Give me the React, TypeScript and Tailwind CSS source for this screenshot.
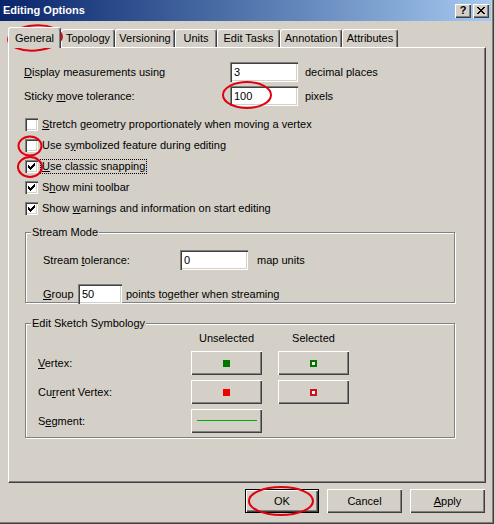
import React from 'react'

const sunken =
  'bg-white shadow-[inset_1px_1px_0_#808080,inset_2px_2px_0_#404040,inset_-1px_-1px_0_#ffffff,inset_-2px_-2px_0_#d4d0c8]'
const raised = 'shadow-[inset_1px_1px_0_#ffffff,inset_-1px_-1px_0_#404040,inset_-2px_-2px_0_#808080]'
const etched =
  'border border-[#808080] shadow-[inset_1px_1px_0_#ffffff,1px_1px_0_#ffffff]'

const CheckBox = ({ checked }: { checked?: boolean }) => (
  <span className={`w-[13px] h-[13px] shrink-0 flex items-center justify-center ${sunken}`}>
    {checked && (
      <svg width="7" height="7" viewBox="0 0 7 7" shapeRendering="crispEdges">
        <path
          d="M6 0h1v1h-1z M5 1h2v1h-2z M0 2h1v1h-1z M4 2h3v1h-3z M0 3h2v1h-2z M3 3h3v1h-3z M0 4h5v1h-5z M1 5h3v1h-3z M2 6h1v1h-1z"
          fill="#000"
        />
      </svg>
    )}
  </span>
)

const CheckRow = ({ checked, children, focus }: { checked?: boolean; children: React.ReactNode; focus?: boolean }) => (
  <div className="h-[21px] flex items-center pl-[16px] gap-[4px]">
    <CheckBox checked={checked} />
    <span className={focus ? 'border border-dotted border-black px-[1px] -ml-[2px]' : ''}>{children}</span>
  </div>
)

const Tab = ({ label, w }: { label: string; w: string }) => (
  <div
    className={`h-[18px] ${w} flex items-center justify-center border-t border-l border-white border-r border-r-[#404040] shadow-[inset_-1px_0_0_#808080] rounded-t-[3px]`}
  >
    {label}
  </div>
)

const SymButton = ({ children }: { children: React.ReactNode }) => (
  <div className={`w-[71px] h-[24px] flex items-center justify-center ${raised}`}>{children}</div>
)

export default function App() {
  return (
    <div className="relative w-[495px] h-[524px] bg-[#d4d0c8] overflow-hidden font-['Liberation_Sans',Arial,sans-serif] text-[11px] leading-[13px] text-black">
      <div className="w-[494px] h-[524px] flex flex-col shadow-[inset_-1px_-1px_0_#404040,inset_-2px_-2px_0_#808080]">
        {/* title bar */}
        <div className="h-[21px] mr-[3px] flex items-center justify-between pl-[3px] pr-[2px] bg-linear-to-r from-[#0a246a] to-[#a6caf0]">
          <span className="text-white font-bold">Editing Options</span>
          <div className="flex gap-[2px]">
            <div className={`w-[16px] h-[14px] bg-[#d4d0c8] flex items-center justify-center font-bold ${raised}`}>?</div>
            <div className={`w-[16px] h-[14px] bg-[#d4d0c8] flex items-center justify-center ${raised}`}>
              <svg width="8" height="7" viewBox="0 0 8 7" shapeRendering="crispEdges">
                <path d="M0 0h2v1h-2z M6 0h2v1h-2z M1 1h2v1h-2z M5 1h2v1h-2z M2 2h4v1h-4z M3 3h2v1h-2z M2 4h4v1h-4z M1 5h2v1h-2z M5 5h2v1h-2z M0 6h2v1h-2z M6 6h2v1h-2z" fill="#000" />
              </svg>
            </div>
          </div>
        </div>

        {/* tabs */}
        <div className="mt-[6px] ml-[8px] h-[20px] flex items-end">
          <div className="relative z-10 h-[21px] w-[53px] -mb-[1px] bg-[#d4d0c8] flex items-center justify-center border-t border-l border-white border-r border-r-[#404040] shadow-[inset_-1px_0_0_#808080] rounded-t-[3px]">
            General
          </div>
          <Tab label="Topology" w="w-[54px]" />
          <Tab label="Versioning" w="w-[60px]" />
          <Tab label="Units" w="w-[42px]" />
          <Tab label="Edit Tasks" w="w-[63px]" />
          <Tab label="Annotation" w="w-[62px]" />
          <Tab label="Attributes" w="w-[56px]" />
        </div>

        {/* tab panel */}
        <div className="ml-[8px] w-[478px] h-[436px] flex flex-col border-l border-t border-white border-r border-b border-r-[#404040] border-b-[#404040] shadow-[inset_-1px_-1px_0_#808080]">
          <div className="mt-[14px] h-[20px] flex items-center pl-[15px]">
            <span className="w-[206px]">
              <u>D</u>isplay measurements using
            </span>
            <div className={`w-[68px] h-[20px] flex items-center pl-[4px] ${sunken}`}>3</div>
            <span className="ml-[7px]">decimal places</span>
          </div>
          <div className="mt-[4px] h-[20px] flex items-center pl-[15px]">
            <span className="w-[206px]">
              Sticky <u>m</u>ove tolerance:
            </span>
            <div className={`w-[68px] h-[20px] flex items-center pl-[4px] ${sunken}`}>100</div>
            <span className="ml-[7px]">pixels</span>
          </div>

          <div className="mt-[8px] flex flex-col">
            <CheckRow>
              <u>S</u>tretch geometry proportionately when moving a vertex
            </CheckRow>
            <CheckRow>
              Use s<u>y</u>mbolized feature during editing
            </CheckRow>
            <CheckRow checked focus>
              <u>U</u>se classic snapping
            </CheckRow>
            <CheckRow checked>
              S<u>h</u>ow mini toolbar
            </CheckRow>
            <CheckRow checked>
              Show <u>w</u>arnings and information on start editing
            </CheckRow>
          </div>

          {/* stream mode */}
          <fieldset className={`mt-[7px] ml-[16px] w-[430px] h-[77px] ${etched}`}>
            <legend className="ml-[5px] px-[1px] bg-[#d4d0c8] relative">Stream Mode</legend>
            <div className="mt-[11px] h-[20px] flex items-center pl-[17px]">
              <span className="w-[137px]">
                Stream <u>t</u>olerance:
              </span>
              <div className={`w-[68px] h-[20px] flex items-center pl-[4px] ${sunken}`}>0</div>
              <span className="ml-[9px]">map units</span>
            </div>
            <div className="mt-[14px] h-[20px] flex items-center pl-[17px]">
              <span className="w-[35px]">
                <u>G</u>roup
              </span>
              <div className={`w-[44px] h-[20px] flex items-center pl-[4px] ${sunken}`}>50</div>
              <span className="ml-[4px]">points together when streaming</span>
            </div>
          </fieldset>

          {/* edit sketch symbology */}
          <fieldset className={`mt-[14px] ml-[16px] w-[430px] h-[121px] ${etched}`}>
            <legend className="ml-[5px] px-[1px] bg-[#d4d0c8] relative">Edit Sketch Symbology</legend>
            <div className="mt-[2px] flex items-center h-[13px]">
              <span className="w-[165px]" />
              <span className="w-[71px] text-center">Unselected</span>
              <span className="ml-[16px] w-[71px] text-center">Selected</span>
            </div>
            <div className="mt-[6px] flex items-center h-[24px]">
              <span className="w-[165px] pl-[12px]">
                <u>V</u>ertex:
              </span>
              <SymButton>
                <span className="w-[7px] h-[7px] bg-[#007800]" />
              </SymButton>
              <div className="ml-[16px]">
                <SymButton>
                  <span className="w-[7px] h-[7px] border-2 border-[#007800] bg-white" />
                </SymButton>
              </div>
            </div>
            <div className="mt-[5px] flex items-center h-[24px]">
              <span className="w-[165px] pl-[12px]">
                Cu<u>r</u>rent Vertex:
              </span>
              <SymButton>
                <span className="w-[7px] h-[7px] bg-[#f00000]" />
              </SymButton>
              <div className="ml-[16px]">
                <SymButton>
                  <span className="w-[7px] h-[7px] border-2 border-[#d01020] bg-white" />
                </SymButton>
              </div>
            </div>
            <div className="mt-[5px] flex items-center h-[24px]">
              <span className="w-[165px] pl-[12px]">
                S<u>e</u>gment:
              </span>
              <SymButton>
                <span className="block w-[60px] h-[2px] shrink-0 border-t border-[#00b000]" />
              </SymButton>
            </div>
          </fieldset>
        </div>

        {/* dialog buttons */}
        <div className="mt-[6px] flex justify-end gap-[8px] pr-[9px]">
          <div className={`w-[74px] h-[24px] flex items-center justify-center border border-black ${raised}`}>OK</div>
          <div className={`w-[75px] h-[24px] flex items-center justify-center ${raised}`}>Cancel</div>
          <div className={`w-[75px] h-[24px] flex items-center justify-center ${raised}`}>
            <span>
              <u>A</u>pply
            </span>
          </div>
        </div>
      </div>

      {/* red annotation circles */}
      <svg className="absolute inset-0 pointer-events-none" width="495" height="524">
        <g fill="none" stroke="#e00010" strokeWidth="2">
          <ellipse cx="35" cy="38" rx="27" ry="12.5" transform="rotate(-4 35 38)" />
          <ellipse cx="247" cy="95" rx="24" ry="13" />
          <ellipse cx="30" cy="146" rx="11.5" ry="9.5" />
          <ellipse cx="30" cy="167" rx="12" ry="10" />
          <ellipse cx="281" cy="501" rx="32" ry="14" />
        </g>
      </svg>
    </div>
  )
}
